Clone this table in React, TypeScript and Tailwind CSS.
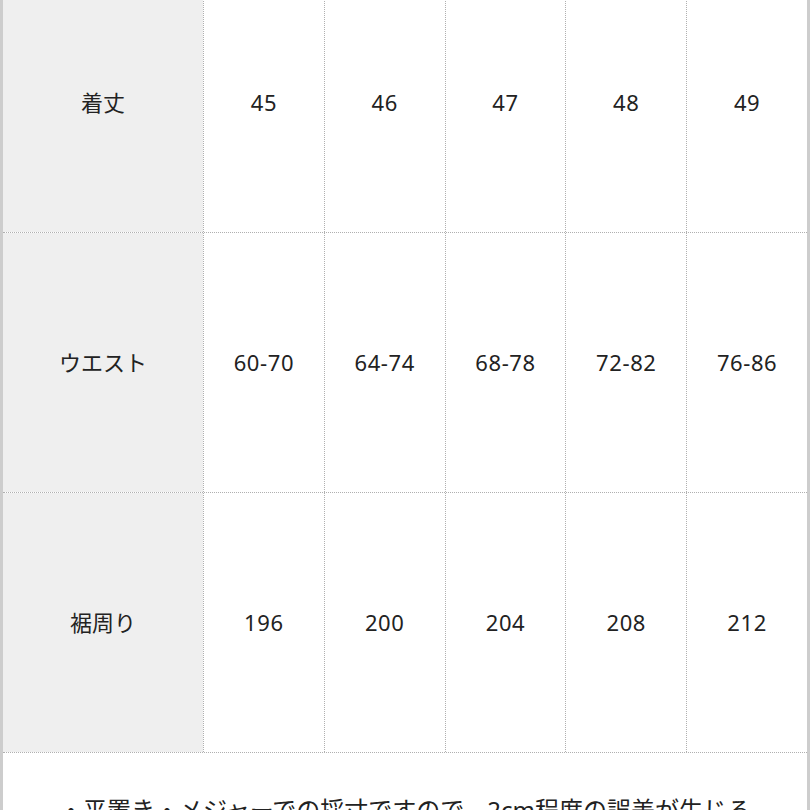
const rows = [
  { label: '着丈', values: ['45', '46', '47', '48', '49'] },
  { label: 'ウエスト', values: ['60-70', '64-74', '68-78', '72-82', '76-86'] },
  { label: '裾周り', values: ['196', '200', '204', '208', '212'] },
];

export default function App() {
  return (
    <div
      className="h-[810px] w-[810px] overflow-hidden bg-white border-l-[3px] border-r-[3px] border-[#cdcdcd] text-[#222]"
      style={{ fontFamily: '"Noto Sans", "Noto Sans CJK JP", sans-serif' }}
    >
      <div className="-mt-[27px]">
        {rows.map((row) => (
          <div
            key={row.label}
            className="grid h-[260px] grid-cols-[200px_1fr_1fr_1fr_1fr_1fr] border-b border-dotted border-[#b0b0b0]"
          >
            <div className="flex items-center justify-center bg-[#efefef] text-[22px]">
              {row.label}
            </div>
            {row.values.map((v, i) => (
              <div
                key={i}
                className="flex items-center justify-center border-l border-dotted border-[#b0b0b0] text-[22px] tracking-[0.6px]"
              >
                {v}
              </div>
            ))}
          </div>
        ))}
      </div>
      <div className="flex justify-center pt-[39px] text-[24px] whitespace-nowrap">
        ・平置き・メジャーでの採寸ですので、2cm程度の誤差が生じる
      </div>
    </div>
  );
}
